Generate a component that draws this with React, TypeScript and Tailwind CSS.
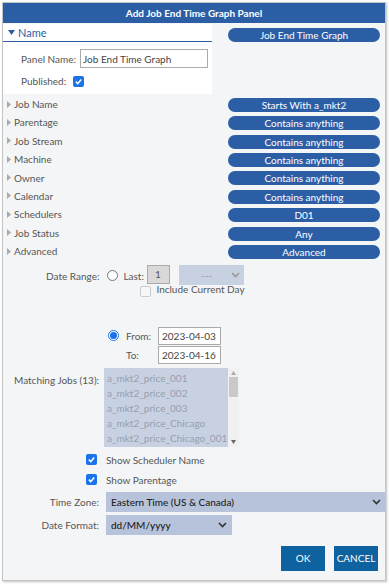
import React from "react";

const filters = [
  { label: "Job Name", value: "Starts With a_mkt2" },
  { label: "Parentage", value: "Contains anything" },
  { label: "Job Stream", value: "Contains anything" },
  { label: "Machine", value: "Contains anything" },
  { label: "Owner", value: "Contains anything" },
  { label: "Calendar", value: "Contains anything" },
  { label: "Schedulers", value: "D01" },
  { label: "Job Status", value: "Any" },
  { label: "Advanced", value: "Advanced" },
];

const jobs = [
  "a_mkt2_price_001",
  "a_mkt2_price_002",
  "a_mkt2_price_003",
  "a_mkt2_price_Chicago",
  "a_mkt2_price_Chicago_001",
];

function Check() {
  return (
    <span className="flex h-[11px] w-[11px] shrink-0 items-center justify-center rounded-[2px] bg-[#1a73e8]">
      <svg width="9" height="9" viewBox="0 0 10 10">
        <path d="M2 5.2 L4.2 7.4 L8 2.8" stroke="white" strokeWidth="1.8" fill="none" />
      </svg>
    </span>
  );
}

function Chevron({ className = "" }: { className?: string }) {
  return (
    <svg width="9" height="6" viewBox="0 0 9 6" className={className}>
      <path d="M1 1 L4.5 4.5 L8 1" stroke="currentColor" strokeWidth="1.6" fill="none" />
    </svg>
  );
}

function Pill({ children }: { children: React.ReactNode }) {
  return (
    <div className="flex h-[14px] w-[152px] items-center justify-center rounded-full bg-[#2c5ea6] text-white">
      {children}
    </div>
  );
}

export default function App() {
  return (
    <div
      className="h-[584px] w-[389px] whitespace-nowrap bg-white p-[2px] text-[10px] leading-[14px] text-[#555]"
      style={{ fontFamily: "Lato, 'Open Sans', sans-serif" }}
    >
      <div className="flex h-[579px] w-[384px] flex-col border border-[#c4c4c4] bg-[#f4f5f7] shadow-[1px_1px_2px_rgba(0,0,0,0.25)]">
        <div className="flex h-[20px] shrink-0 items-center justify-center bg-[#2c5ea6] font-bold text-white">
          Add Job End Time Graph Panel
        </div>

        <div className="flex gap-[16px] pr-[5px]">
          <div className="w-[211px]">
            <div className="mt-[1px] bg-white">
              <div className="flex h-[18px] items-center gap-[3px] border-b border-[#2c5ea6] pl-[5px] text-[11px] text-[#2c5ea6]">
                <svg width="7" height="5" viewBox="0 0 7 5">
                  <path d="M0 0 H7 L3.5 5 Z" fill="#2c5ea6" />
                </svg>
                <span>Name</span>
              </div>
              <div className="flex flex-col gap-[6px] pb-[6px] pl-[18px] pt-[7px]">
                <div className="flex items-center gap-[4px]">
                  <span>Panel Name:</span>
                  <div className="flex h-[19px] w-[128px] items-center border border-[#aaa] bg-white px-[2px] text-[#444]">
                    Job End Time Graph
                  </div>
                </div>
                <div className="flex items-center gap-[7px]">
                  <span>Published:</span>
                  <Check />
                </div>
              </div>
            </div>
            <div className="flex flex-col gap-[4.4px] pt-[3px]">
              {filters.map((f) => (
                <div key={f.label} className="flex h-[14px] items-center gap-[3px] pl-[4px]">
                  <svg width="4" height="7" viewBox="0 0 4 7">
                    <path d="M0 0 L4 3.5 L0 7 Z" fill="#aaa" />
                  </svg>
                  <span>{f.label}</span>
                </div>
              ))}
            </div>
          </div>
          <div className="flex flex-col gap-[4.4px] pt-[5px]">
            <Pill>Job End Time Graph</Pill>
            <div className="h-[47px]" />
            {filters.map((f) => (
              <Pill key={f.label}>{f.value}</Pill>
            ))}
          </div>
        </div>

        <div className="mt-[6px] flex pl-[43px]">
          <span className="pt-[4px]">Date Range:</span>
          <div className="ml-[8px] flex flex-col">
            <div className="flex items-start">
              <span className="mt-[5px] h-[11px] w-[11px] rounded-full border border-[#777] bg-white" />
              <span className="ml-[5px] pt-[4px]">Last:</span>
              <div className="ml-[3px] flex h-[19px] w-[23px] items-center border border-[#aaa] bg-[#d9d9d9] pl-[7px]">1</div>
              <div className="ml-[9px] flex h-[20px] w-[65px] items-center justify-between bg-[#c8d1e2] pl-[22px] pr-[4px] text-[#999]">
                <span>---</span>
                <Chevron />
              </div>
            </div>
            <div className="ml-[33px] flex items-start gap-[5px]">
              <span className="mt-[1px] h-[11px] w-[11px] rounded-[2px] border border-[#ccc] bg-[#f7f7f7]" />
              <span className="-mt-[3px]">Include Current Day</span>
            </div>
          </div>
        </div>

        <div className="ml-[105px] mt-[30px] flex flex-col gap-[1px]">
          <div className="flex items-center">
            <span className="flex h-[11px] w-[11px] items-center justify-center rounded-full border border-[#1a73e8] bg-white">
              <span className="h-[7px] w-[7px] rounded-full bg-[#1a73e8]" />
            </span>
            <span className="ml-[7px] w-[32px]">From:</span>
            <div className="flex h-[18px] w-[63px] items-center border border-[#aaa] bg-white px-[3px] text-[#444]">2023-04-03</div>
          </div>
          <div className="flex items-center">
            <span className="ml-[18px] w-[32px]">To:</span>
            <div className="flex h-[18px] w-[63px] items-center border border-[#aaa] bg-white px-[3px] text-[#444]">2023-04-16</div>
          </div>
        </div>

        <div className="mt-[4px] flex">
          <span className="w-[101px] pl-[11px] pt-[5px]">Matching Jobs (13):</span>
          <div className="flex h-[79px]">
            <div className="flex w-[124px] flex-col overflow-hidden bg-[#c8d1e2] pl-[3px] pt-[3px] text-[#959fb0]">
              {jobs.map((j) => (
                <div key={j} className="h-[15px] leading-[15px]">{j}</div>
              ))}
            </div>
            <div className="flex w-[11px] flex-col items-center bg-[#f1f1f1]">
              <svg width="5" height="4" viewBox="0 0 5 4" className="mt-[3px]">
                <path d="M0 4 L2.5 0 L5 4 Z" fill="#aaa" />
              </svg>
              <div className="mt-[2px] h-[20px] w-[9px] bg-[#c9c9c9]" />
              <div className="flex-1" />
              <svg width="5" height="4" viewBox="0 0 5 4" className="mb-[3px]">
                <path d="M0 0 L2.5 4 L5 0 Z" fill="#666" />
              </svg>
            </div>
          </div>
        </div>

        <div className="ml-[83px] mt-[6px] flex flex-col gap-[6px]">
          <div className="flex items-center gap-[9px]">
            <Check />
            <span>Show Scheduler Name</span>
          </div>
          <div className="flex items-center gap-[9px]">
            <Check />
            <span>Show Parentage</span>
          </div>
        </div>

        <div className="mt-[5px] flex flex-col gap-[3px]">
          <div className="flex items-center">
            <span className="w-[96px] text-right">Time Zone:</span>
            <div className="ml-[7px] flex h-[20px] w-[279px] items-center justify-between bg-[#b7c3da] pl-[5px] pr-[4px] font-medium text-[#222]">
              <span>Eastern Time (US &amp; Canada)</span>
              <Chevron className="text-[#333]" />
            </div>
          </div>
          <div className="flex items-center">
            <span className="w-[96px] text-right">Date Format:</span>
            <div className="ml-[7px] flex h-[20px] w-[126px] items-center justify-between bg-[#b7c3da] pl-[5px] pr-[5px] font-medium text-[#222]">
              <span>dd/MM/yyyy</span>
              <Chevron className="text-[#333]" />
            </div>
          </div>
        </div>

        <div className="mt-[11px] flex justify-end gap-[9px] pr-[7px]">
          <button className="flex h-[25px] w-[44px] items-center justify-center bg-[#0f62a0] text-white">OK</button>
          <button className="flex h-[25px] w-[44px] items-center justify-center bg-[#0f62a0] text-white">CANCEL</button>
        </div>
      </div>
    </div>
  );
}
